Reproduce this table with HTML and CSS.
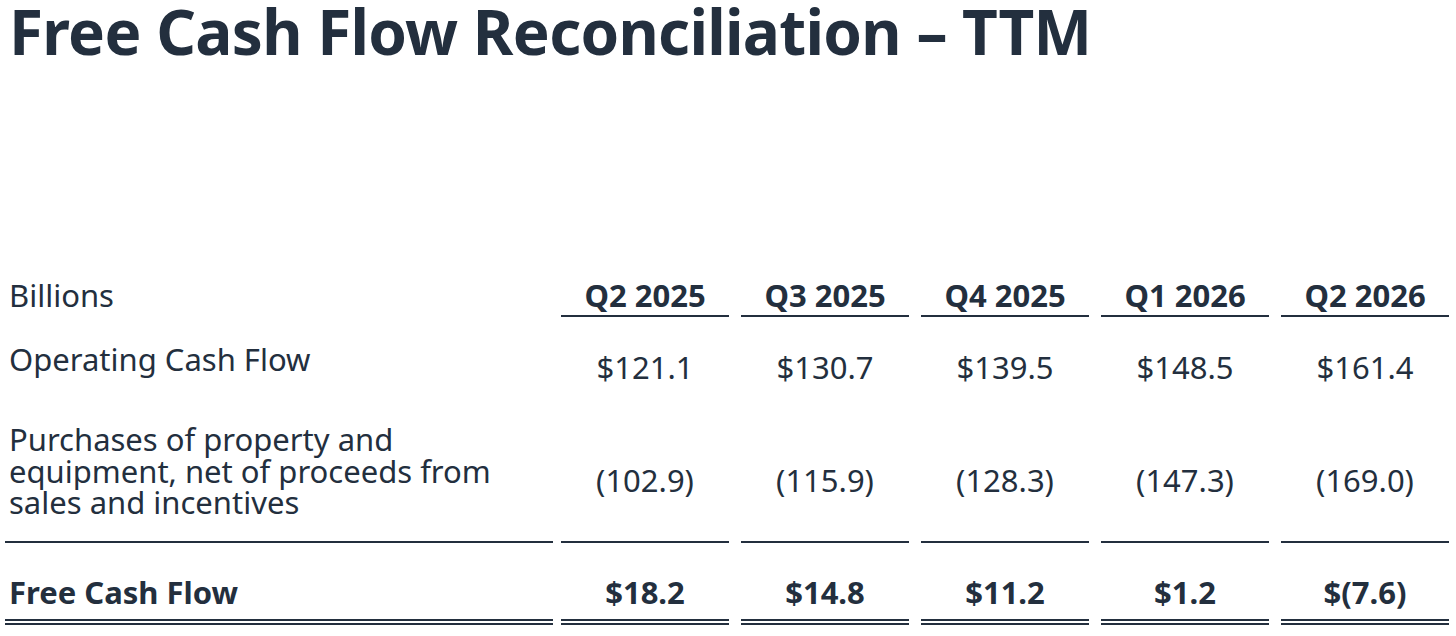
FILE: index.html
```html
<!DOCTYPE html>
<html lang="en">
<head>
<meta charset="utf-8">
<title>Free Cash Flow Reconciliation – TTM</title>
<link rel="stylesheet" href="styles.css">
</head>
<body>
<main class="slide">
  <h1 class="title">Free Cash Flow Reconciliation – TTM</h1>
  <div class="table">
    <div class="cell label head">Billions</div>
    <div class="cell val head">Q2 2025</div>
    <div class="cell val head">Q3 2025</div>
    <div class="cell val head">Q4 2025</div>
    <div class="cell val head">Q1 2026</div>
    <div class="cell val head">Q2 2026</div>

    <div class="cell label ocf">Operating Cash Flow</div>
    <div class="cell val ocf">$121.1</div>
    <div class="cell val ocf">$130.7</div>
    <div class="cell val ocf">$139.5</div>
    <div class="cell val ocf">$148.5</div>
    <div class="cell val ocf">$161.4</div>

    <div class="cell label capex">Purchases of property and equipment, net of proceeds from sales and incentives</div>
    <div class="cell val capex">(102.9)</div>
    <div class="cell val capex">(115.9)</div>
    <div class="cell val capex">(128.3)</div>
    <div class="cell val capex">(147.3)</div>
    <div class="cell val capex">(169.0)</div>

    <div class="cell label fcf">Free Cash Flow</div>
    <div class="cell val fcf">$18.2</div>
    <div class="cell val fcf">$14.8</div>
    <div class="cell val fcf">$11.2</div>
    <div class="cell val fcf">$1.2</div>
    <div class="cell val fcf">$(7.6)</div>
  </div>
</main>
</body>
</html>
```
FILE: styles.css
```css
html, body {
  margin: 0;
  padding: 0;
  background: #ffffff;
}

body {
  color: #232f3e;
  font-family: "Noto Sans", "Open Sans", sans-serif;
}

.slide {
  width: 1456px;
  height: 636px;
  overflow: hidden;
}

.title {
  margin: 0;
  padding-left: 9px;
  font-size: 62px;
  line-height: 62px;
  font-weight: 700;
  letter-spacing: -0.7px;
  white-space: nowrap;
}

.table {
  display: grid;
  grid-template-columns: 544px repeat(5, 168px);
  column-gap: 12px;
  padding-left: 5px;
  margin-top: 217px;
  font-size: 31px;
  line-height: 32px;
}

.cell {
  box-sizing: border-box;
}

.label {
  margin-right: -4px;
  padding-left: 4px;
}

.val {
  text-align: center;
  white-space: nowrap;
}

/* header row */
.head {
  padding-bottom: 4px;
}
.val.head {
  font-weight: 700;
  border-bottom: 2px solid #232f3e;
}

/* operating cash flow row */
.label.ocf {
  padding-top: 26px;
  padding-bottom: 25px;
}
.val.ocf {
  padding-top: 34px;
}

/* purchases row */
.label.capex {
  padding-top: 24px;
  padding-bottom: 22px;
  line-height: 31.5px;
  padding-right: 40px;
  border-bottom: 2px solid #232f3e;
}
.val.capex {
  padding-top: 64px;
  border-bottom: 2px solid #232f3e;
}

/* free cash flow row */
.fcf {
  font-weight: 700;
  padding-top: 33px;
  padding-bottom: 11px;
  border-bottom: 6px double #232f3e;
}
```
